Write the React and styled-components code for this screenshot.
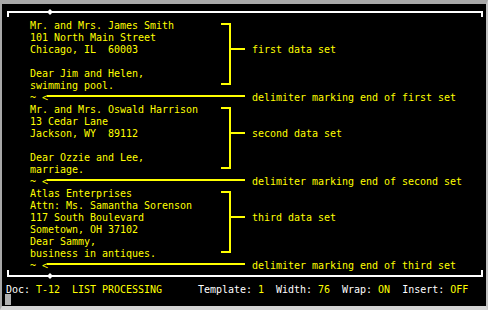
import styled, { createGlobalStyle } from 'styled-components';

const GlobalStyle = createGlobalStyle`
  html, body {
    margin: 0;
    padding: 0;
    background: #000;
  }
  #root {
    width: 488px;
    height: 310px;
  }
`;

const YELLOW = '#ffff00';

// terminal frame
const Screen = styled.div`
  box-sizing: border-box;
  width: 488px;
  height: 310px;
  display: flex;
  flex-direction: column;
  overflow: hidden;
  background: #000;
  border-top: 4px solid #a8a8a8;
  border-left: 2px solid #a8a8a8;
  border-right: 2px solid #c4c4c4;
  border-bottom: 4px solid #d4d4d4;
  font-family: "DejaVu Sans Mono", "Liberation Mono", monospace;
  font-size: 10px;
  line-height: 12px;
  letter-spacing: -0.02px;
  color: ${YELLOW};
  white-space: pre;
`;

const Ruler = styled.div`
  position: relative;
  box-sizing: border-box;
  flex: none;
  height: ${(p) => p.$height}px;
  margin: ${(p) => p.$margin};
  border: 2px solid #fff;
  ${(p) => (p.$bottom ? 'border-top: none;' : 'border-bottom: none;')}
`;

const Diamond = styled.svg`
  position: absolute;
  left: 38px;
  top: ${(p) => p.$top}px;
`;

const Editor = styled.div`
  padding-left: 28px;
  display: flex;
  flex-direction: column;
`;

const Block = styled.div`
  display: grid;
  grid-template-columns: 191px 24px 1fr;
`;

const Lines = styled.div`
  display: flex;
  flex-direction: column;
`;

const Line = styled.div`
  height: 12px;
`;

const Label = styled.div`
  padding-left: 7px;
  margin-top: ${(p) => p.$offset || 0}px;
  height: 12px;
`;

const DelimiterMark = styled.div`
  grid-column: 1 / 3;
  display: flex;
  height: 12px;
`;

const Arrow = styled.div`
  flex: 1;
  align-self: flex-start;
  height: 2px;
  margin-top: 3px;
  margin-left: -1px;
  background: ${YELLOW};
`;

const StatusBar = styled.div`
  height: 12px;
  margin-top: 7px;
  padding-left: 4px;
  color: #fff;
`;

const Value = styled.span`
  color: ${YELLOW};
`;

const Cursor = styled.div`
  width: 6px;
  height: 11px;
  margin: -2px 0 0 3px;
  background: #b0b0b0;
`;

const dataSets = [
  {
    label: 'first',
    lines: [
      'Mr. and Mrs. James Smith',
      '101 North Main Street',
      'Chicago, IL  60003',
      '',
      'Dear Jim and Helen,',
      'swimming pool.',
    ],
  },
  {
    label: 'second',
    lines: [
      'Mr. and Mrs. Oswald Harrison',
      '13 Cedar Lane',
      'Jackson, WY  89112',
      '',
      'Dear Ozzie and Lee,',
      'marriage.',
    ],
  },
  {
    label: 'third',
    lines: [
      'Atlas Enterprises',
      'Attn: Ms. Samantha Sorenson',
      '117 South Boulevard',
      'Sometown, OH 37102',
      'Dear Sammy,',
      'business in antiques.',
    ],
  },
];

const RulerDiamond = ({ top }) => (
  <Diamond $top={top} width="6" height="6" viewBox="0 0 6 6">
    <polygon points="3,0 6,3 3,6 0,3" fill="#fff" />
  </Diamond>
);

const Bracket = () => (
  <svg width="24" height="72" viewBox="0 0 24 72">
    <path d="M0 4H9V64H0M9 29H24" stroke={YELLOW} strokeWidth="2" fill="none" />
  </svg>
);

const DataSet = ({ label, lines }) => (
  <>
    <Block>
      <Lines>
        {lines.map((text, i) => (
          <Line key={i}>{text || '\u00a0'}</Line>
        ))}
      </Lines>
      <Bracket />
      <Label $offset={24}>{label} data set</Label>
    </Block>
    <Block>
      <DelimiterMark>
        ~ {'<'}
        <Arrow />
      </DelimiterMark>
      <Label>delimiter marking end of {label} set</Label>
    </Block>
  </>
);

const App = () => (
  <>
    <GlobalStyle />
    <Screen>
      <Ruler $height={6} $margin="7px 3px 3px 5px">
        <RulerDiamond top={-4} />
      </Ruler>
      <Editor>
        {dataSets.map((set) => (
          <DataSet key={set.label} {...set} />
        ))}
      </Editor>
      <Ruler $bottom $height={7} $margin="-2px 3px 0 5px">
        <RulerDiamond top={3} />
      </Ruler>
      <StatusBar>
        Doc: <Value>T-12  LIST PROCESSING</Value>      Template: <Value>1</Value>  Width: <Value>76</Value>  Wrap: <Value>ON</Value>  Insert: <Value>OFF</Value>
      </StatusBar>
      <Cursor />
    </Screen>
  </>
);

export default App;
